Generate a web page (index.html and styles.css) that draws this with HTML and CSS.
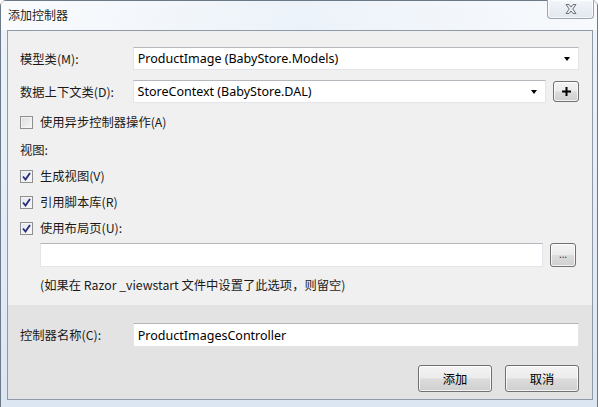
FILE: index.html
```html
<!DOCTYPE html>
<html lang="zh-CN">
<head>
<meta charset="utf-8">
<title>添加控制器</title>
<link rel="stylesheet" href="styles.css">
</head>
<body>
<div class="window">
  <div class="titlebar">
    <span class="title">添加控制器</span>
    <div class="close">
      <svg width="20" height="12" viewBox="0 0 20 12"><path d="M5 1.5 L8 1.5 L10 4 L12 1.5 L15 1.5 L11.8 6 L15 10.5 L12 10.5 L10 8 L8 10.5 L5 10.5 L8.2 6 Z" fill="#e9ecef" stroke="#6d7480" stroke-width="1" stroke-linejoin="round"/></svg>
    </div>
  </div>
  <div class="client">
    <div class="main">
      <div class="row r1">
        <span class="label">模型类(M):</span>
        <div class="combo wide"><span>ProductImage (BabyStore.Models)</span><i class="arrow"></i></div>
      </div>
      <div class="row r2">
        <span class="label">数据上下文类(D):</span>
        <div class="combo narrow"><span>StoreContext (BabyStore.DAL)</span><i class="arrow"></i></div>
        <div class="btn small plus">
          <svg width="11" height="11" viewBox="0 0 11 11"><path d="M5.5 1 V10 M1 5.5 H10" stroke="#000" stroke-width="2"/></svg>
        </div>
      </div>
      <div class="check r3"><i class="box"></i><span>使用异步控制器操作(A)</span></div>
      <div class="check r4"><span>视图:</span></div>
      <div class="check r5"><i class="box on"><svg width="9" height="9" viewBox="0 0 9 9"><path d="M1 4.5 L3.5 7.5 L8 1" fill="none" stroke="#2a2f7a" stroke-width="1.9"/></svg></i><span>生成视图(V)</span></div>
      <div class="check r6"><i class="box on"><svg width="9" height="9" viewBox="0 0 9 9"><path d="M1 4.5 L3.5 7.5 L8 1" fill="none" stroke="#2a2f7a" stroke-width="1.9"/></svg></i><span>引用脚本库(R)</span></div>
      <div class="check r7"><i class="box on"><svg width="9" height="9" viewBox="0 0 9 9"><path d="M1 4.5 L3.5 7.5 L8 1" fill="none" stroke="#2a2f7a" stroke-width="1.9"/></svg></i><span>使用布局页(U):</span></div>
      <div class="row r8">
        <div class="textbox layout"></div>
        <div class="btn small dots">...</div>
      </div>
      <div class="hint">(如果在 Razor _viewstart 文件中设置了此选项，则留空)</div>
    </div>
    <div class="footer">
      <div class="row r9">
        <span class="label">控制器名称(C):</span>
        <div class="textbox name">ProductImagesController</div>
      </div>
      <div class="buttons">
        <div class="btn big">添加</div>
        <div class="btn big">取消</div>
      </div>
    </div>
  </div>
</div>
</body>
</html>
```

FILE: styles.css
```css
* { box-sizing: border-box; }
html, body { margin: 0; padding: 0; }
body {
  width: 600px;
  height: 407px;
  overflow: hidden;
  background: #ffffff;
  font-family: "Noto Sans", "Noto Sans CJK SC", sans-serif;
  font-size: 12px;
  color: #1a1a1a;
}
.window {
  width: 598px;
  height: 407px;
  border: 1px solid #6b7888;
  border-bottom: none;
  border-radius: 6px 6px 0 0;
  background: linear-gradient(180deg, #eef3f9 0%, #e6eef7 40%, #dbe6f2 100%);
  display: flex;
  flex-direction: column;
}
.titlebar {
  height: 29px;
  display: flex;
  align-items: flex-start;
  justify-content: space-between;
  background: linear-gradient(90deg, rgba(255,255,255,0.7), rgba(235,242,250,0.4) 50%, rgba(255,255,255,0.6));
}
.title {
  margin: 5px 0 0 7px;
  font-family: "Noto Sans CJK SC", sans-serif;
  font-size: 12px;
  color: #1c1c1c;
  text-shadow: 0 0 6px #fff, 0 0 3px #fff;
}
.close {
  width: 47px;
  height: 19px;
  margin: -1px 3px 0 0;
  border: 1px solid #9aa4b2;
  border-top: none;
  border-radius: 0 0 4px 4px;
  background: linear-gradient(180deg, #f3f6fa, #e1e7ef);
  box-shadow: inset 0 0 0 1px rgba(255,255,255,0.7);
  display: flex;
  align-items: center;
  justify-content: center;
}
.client {
  margin-left: 6px;
  width: 586px;
  height: 370px;
  border: 1px solid #8f9aa8;
  background: #f0f0f0;
  display: flex;
  flex-direction: column;
}
.main {
  height: 274px;
  padding: 16px 13px 0 12px;
  display: flex;
  flex-direction: column;
}
.row { display: flex; align-items: center; }
.label {
  width: 113px;
  font-family: "Noto Sans CJK SC", sans-serif;
  font-size: 12.3px;
}
.combo, .textbox {
  background: #fff;
  border: 1px solid #e2e6ea;
  border-top-color: #b4b8bd;
  display: flex;
  align-items: center;
  padding-left: 4px;
  font-family: "Noto Sans", "Noto Sans CJK SC", sans-serif;
  font-size: 12.5px;
  color: #000;
}
.combo { height: 23px; justify-content: space-between; padding-right: 8px; }
.combo.wide { width: 447px; }
.combo.narrow { width: 415px; }
.arrow {
  width: 0; height: 0;
  border-left: 3.5px solid transparent;
  border-right: 3.5px solid transparent;
  border-top: 4px solid #000;
}
.r1 { height: 23px; }
.r2 { height: 23px; margin-top: 10px; }
.btn {
  border: 1px solid #707070;
  border-radius: 3px;
  background: linear-gradient(180deg, #f4f4f4 0%, #ebebeb 48%, #dcdcdc 52%, #cfcfcf 100%);
  box-shadow: inset 0 0 0 1px rgba(255,255,255,0.75);
  display: flex;
  align-items: center;
  justify-content: center;
}
.btn.small { width: 26px; margin-left: 7px; }
.plus { height: 21px; }
.dots { height: 24px; font-size: 10px; line-height: 1; padding-bottom: 2px; color: #333; }
.check {
  height: 18px;
  display: flex;
  align-items: center;
  font-family: "Noto Sans CJK SC", sans-serif;
  font-size: 12.3px;
}
.box {
  width: 13px; height: 13px;
  border: 1px solid #8e8f8f;
  background: linear-gradient(135deg, #dcdcdc, #f7f7f7);
  box-shadow: inset 0 0 0 1px #f4f4f4;
  margin-right: 7px;
  display: flex;
  align-items: center;
  justify-content: center;
}
.box.on { background: linear-gradient(135deg, #e4e4ee, #fbfbfd); }
.r3 { margin-top: 10px; }
.r4 { margin-top: 10px; }
.r5 { margin-top: 8px; }
.r6 { margin-top: 8px; }
.r7 { margin-top: 8px; }
.r8 { margin-top: 6px; padding-left: 20px; height: 24px; }
.textbox.layout { width: 503px; height: 24px; }
.hint {
  margin-top: 9px;
  padding-left: 20px;
  height: 18px;
  display: flex;
  align-items: center;
  font-family: "Noto Sans CJK SC", sans-serif;
  font-size: 12.3px;
}
.footer {
  flex: 1;
  background: #e3e3e3;
  padding: 18px 13px 0 12px;
  display: flex;
  flex-direction: column;
}
.r9 { height: 24px; }
.textbox.name { width: 447px; height: 24px; }
.buttons {
  margin-top: 18px;
  display: flex;
  justify-content: flex-end;
  gap: 13px;
}
.btn.big {
  width: 74px;
  height: 27px;
  font-family: "Noto Sans CJK SC", sans-serif;
  font-size: 12.3px;
  color: #000;
}
```
